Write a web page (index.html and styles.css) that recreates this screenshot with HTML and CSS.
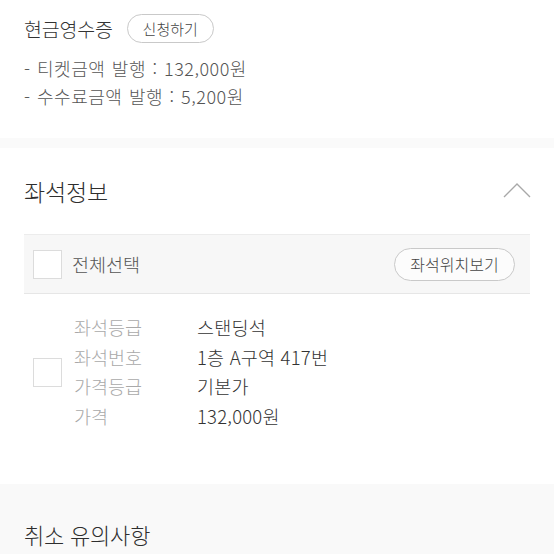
FILE: index.html
```html
<!DOCTYPE html>
<html lang="ko">
<head>
<meta charset="utf-8">
<link rel="stylesheet" href="styles.css">
</head>
<body>
<section class="receipt">
  <div class="receipt-head">
    <span class="receipt-title">현금영수증</span>
    <button class="pill pill-sm">신청하기</button>
  </div>
  <p class="receipt-line">- 티켓금액 발행 : 132,000원</p>
  <p class="receipt-line">- 수수료금액 발행 : 5,200원</p>
</section>
<div class="divider"></div>
<section class="seat">
  <div class="seat-head">
    <h2 class="section-title">좌석정보</h2>
    <svg class="chevron" width="30" height="18" viewBox="0 0 30 18"><path d="M2 16 L15 3 L28 16" fill="none" stroke="#a8a8a8" stroke-width="1.4"/></svg>
  </div>
  <div class="seat-table">
    <div class="table-head">
      <span class="check"></span>
      <span class="all-label">전체선택</span>
      <button class="pill pill-md">좌석위치보기</button>
    </div>
    <div class="seat-row">
      <span class="check"></span>
      <dl class="seat-info">
        <dt>좌석등급</dt><dd>스탠딩석</dd>
        <dt>좌석번호</dt><dd>1층 A구역 417번</dd>
        <dt>가격등급</dt><dd>기본가</dd>
        <dt>가격</dt><dd>132,000원</dd>
      </dl>
    </div>
  </div>
</section>
<section class="notice">
  <h2 class="section-title">취소 유의사항</h2>
</section>
</body>
</html>
```
FILE: styles.css
```css
* { box-sizing: border-box; }
html, body { margin: 0; padding: 0; background: #fff; }
body {
  font-family: "Noto Sans CJK KR", "Noto Sans", sans-serif;
  font-weight: 300;
  color: #333;
  width: 554px;
  height: 554px;
  overflow: hidden;
}
.receipt { padding: 12px 24px 0; height: 138px; }
.receipt-head { display: flex; align-items: center; gap: 14px; height: 33px; }
.receipt-title { font-size: 19.5px; color: #333; letter-spacing: -0.2px; }
.pill {
  font-family: inherit;
  font-weight: 300;
  background: #fff;
  border: 1px solid #c9c9c9;
  border-radius: 999px;
  color: #444;
  padding: 0;
  line-height: 1;
}
.pill-sm { width: 87px; height: 29px; font-size: 15px; }
.receipt-line { margin: 0; font-size: 18px; color: #555; line-height: 28px; letter-spacing: 0.5px; word-spacing: 1px; }
.receipt-head + .receipt-line { margin-top: 9px; }
.divider { height: 10px; background: #fafafa; }
.seat { padding: 0 24px; height: 336px; }
.seat-head { display: flex; align-items: center; justify-content: space-between; height: 86px; }
.section-title { margin: 0; font-weight: 300; font-size: 23px; color: #2e2e2e; letter-spacing: -0.2px; }
.chevron { margin-top: -2px; margin-right: -2px; }
.seat-table { width: 506px; }
.table-head {
  display: flex; align-items: center;
  height: 60px;
  background: #f7f7f7;
  border-top: 1px solid #ececec;
  border-bottom: 1px solid #e6e6e6;
  padding: 0 15px 0 9px;
}
.check {
  width: 29px; height: 29px;
  border: 1px solid #dcdcdc;
  background: #fff;
  flex: none;
}
.all-label { margin-left: 10px; font-size: 18.5px; color: #555; flex: 1; }
.pill-md { width: 121px; height: 33px; font-size: 16px; background: #fcfcfc; }
.seat-row { display: flex; align-items: center; padding: 19px 0 0 9px; }
.seat-info {
  margin: 0 0 0 12px;
  display: grid;
  grid-template-columns: 123px auto;
  font-size: 18.5px;
  line-height: 29.7px;
}
.seat-info dt { color: #a9a9a9; }
.seat-info dd { margin: 0; color: #333; letter-spacing: 0.2px; }
.notice { background: #f9f9f9; padding: 34px 24px; height: 80px; }
.notice .section-title { font-size: 22px; }
```
